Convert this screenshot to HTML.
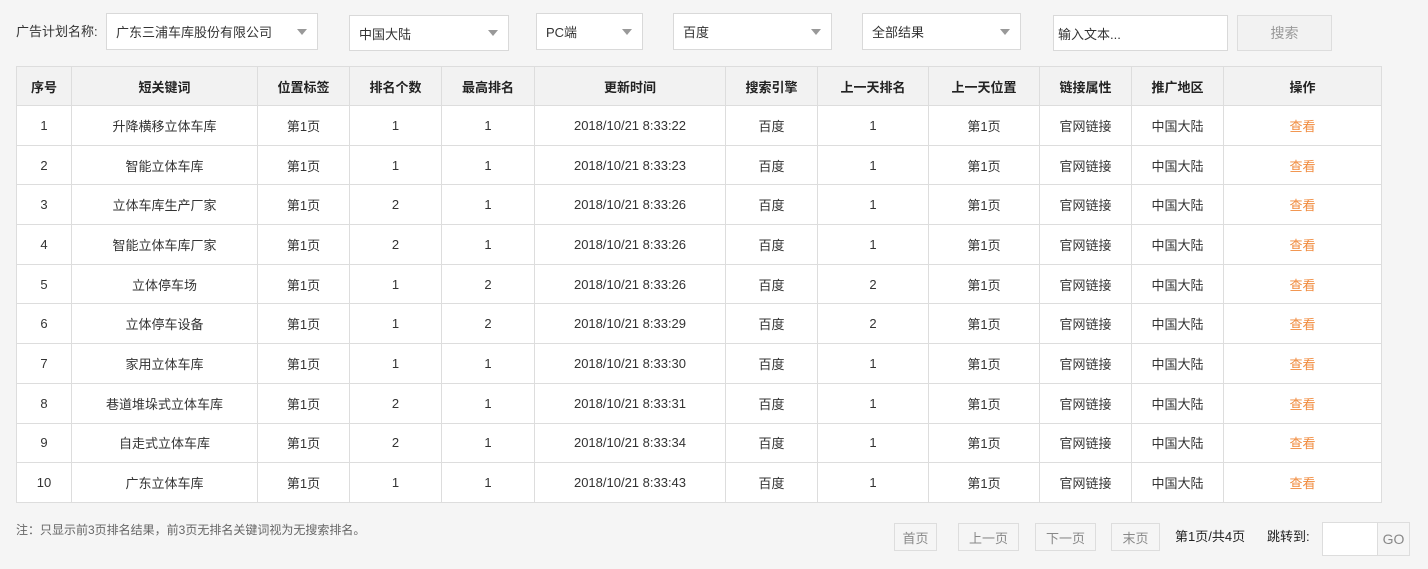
<!DOCTYPE html>
<html><head><meta charset="utf-8"><style>
body{margin:0;width:1428px;height:569px;background:#f5f5f5;font-family:"Liberation Sans","Noto Sans CJK SC",sans-serif;font-size:13px;color:#333;position:relative;overflow:hidden}
.a{position:absolute;box-sizing:border-box}
.sel{background:#fff;border:1px solid #d9d9d9;padding-left:9px;display:flex;align-items:center}
.sel i{position:absolute;right:10px;top:50%;margin-top:-3px;border-left:5px solid transparent;border-right:5px solid transparent;border-top:6px solid #999}
table{position:absolute;left:16px;top:66px;border-collapse:collapse;background:#fff;table-layout:fixed}
td,th{border:1px solid #ddd;text-align:center;height:38.7px;padding:0;font-size:13px}
th{background:#f2f2f2;font-weight:bold;color:#222;height:38px}
.o{color:#f08a3c}
.pb{border:1px solid #ddd;color:#888;display:flex;align-items:center;justify-content:center;background:#f5f5f5}
</style></head><body>
<div class="a" style="left:16px;top:23px;line-height:18px">广告计划名称:</div>
<div class="a sel" style="left:106px;top:13px;width:212px;height:37px">广东三浦车库股份有限公司<i></i></div>
<div class="a sel" style="left:349px;top:15px;width:160px;height:36px">中国大陆<i></i></div>
<div class="a sel" style="left:536px;top:13px;width:107px;height:37px">PC端<i></i></div>
<div class="a sel" style="left:673px;top:13px;width:159px;height:37px">百度<i></i></div>
<div class="a sel" style="left:862px;top:13px;width:159px;height:37px">全部结果<i></i></div>
<div class="a sel" style="left:1053px;top:15px;width:175px;height:36px;padding-left:4px">输入文本...</div>
<div class="a pb" style="left:1237px;top:15px;width:95px;height:36px;background:#f2f2f2;color:#999;font-size:14px">搜索</div>
<table>
<colgroup><col style="width:55px"><col style="width:186px"><col style="width:92px"><col style="width:92px"><col style="width:93px"><col style="width:191px"><col style="width:92px"><col style="width:111px"><col style="width:111px"><col style="width:92px"><col style="width:92px"><col style="width:158px"></colgroup>
<tr><th>序号</th><th>短关键词</th><th>位置标签</th><th>排名个数</th><th>最高排名</th><th>更新时间</th><th>搜索引擎</th><th>上一天排名</th><th>上一天位置</th><th>链接属性</th><th>推广地区</th><th>操作</th></tr>
<tr><td>1</td><td>升降横移立体车库</td><td>第1页</td><td>1</td><td>1</td><td>2018/10/21 8:33:22</td><td>百度</td><td>1</td><td>第1页</td><td>官网链接</td><td>中国大陆</td><td class="o">查看</td></tr>
<tr><td>2</td><td>智能立体车库</td><td>第1页</td><td>1</td><td>1</td><td>2018/10/21 8:33:23</td><td>百度</td><td>1</td><td>第1页</td><td>官网链接</td><td>中国大陆</td><td class="o">查看</td></tr>
<tr><td>3</td><td>立体车库生产厂家</td><td>第1页</td><td>2</td><td>1</td><td>2018/10/21 8:33:26</td><td>百度</td><td>1</td><td>第1页</td><td>官网链接</td><td>中国大陆</td><td class="o">查看</td></tr>
<tr><td>4</td><td>智能立体车库厂家</td><td>第1页</td><td>2</td><td>1</td><td>2018/10/21 8:33:26</td><td>百度</td><td>1</td><td>第1页</td><td>官网链接</td><td>中国大陆</td><td class="o">查看</td></tr>
<tr><td>5</td><td>立体停车场</td><td>第1页</td><td>1</td><td>2</td><td>2018/10/21 8:33:26</td><td>百度</td><td>2</td><td>第1页</td><td>官网链接</td><td>中国大陆</td><td class="o">查看</td></tr>
<tr><td>6</td><td>立体停车设备</td><td>第1页</td><td>1</td><td>2</td><td>2018/10/21 8:33:29</td><td>百度</td><td>2</td><td>第1页</td><td>官网链接</td><td>中国大陆</td><td class="o">查看</td></tr>
<tr><td>7</td><td>家用立体车库</td><td>第1页</td><td>1</td><td>1</td><td>2018/10/21 8:33:30</td><td>百度</td><td>1</td><td>第1页</td><td>官网链接</td><td>中国大陆</td><td class="o">查看</td></tr>
<tr><td>8</td><td>巷道堆垛式立体车库</td><td>第1页</td><td>2</td><td>1</td><td>2018/10/21 8:33:31</td><td>百度</td><td>1</td><td>第1页</td><td>官网链接</td><td>中国大陆</td><td class="o">查看</td></tr>
<tr><td>9</td><td>自走式立体车库</td><td>第1页</td><td>2</td><td>1</td><td>2018/10/21 8:33:34</td><td>百度</td><td>1</td><td>第1页</td><td>官网链接</td><td>中国大陆</td><td class="o">查看</td></tr>
<tr><td>10</td><td>广东立体车库</td><td>第1页</td><td>1</td><td>1</td><td>2018/10/21 8:33:43</td><td>百度</td><td>1</td><td>第1页</td><td>官网链接</td><td>中国大陆</td><td class="o">查看</td></tr>
</table>
<div class="a" style="left:16px;top:521px;color:#666;font-size:12px;line-height:18px">注：只显示前3页排名结果，前3页无排名关键词视为无搜索排名。</div>
<div class="a pb" style="left:894px;top:523px;width:43px;height:28px">首页</div>
<div class="a pb" style="left:958px;top:523px;width:61px;height:28px">上一页</div>
<div class="a pb" style="left:1035px;top:523px;width:61px;height:28px">下一页</div>
<div class="a pb" style="left:1111px;top:523px;width:49px;height:28px">末页</div>
<div class="a" style="left:1175px;top:528px;line-height:18px;color:#222">第1页/共4页</div>
<div class="a" style="left:1267px;top:528px;line-height:18px;color:#222">跳转到:</div>
<div class="a" style="left:1322px;top:522px;width:88px;height:34px;border:1px solid #ddd;background:#fff"></div>
<div class="a pb" style="left:1377px;top:522px;width:33px;height:34px;border-color:#ddd;font-size:14px;color:#888">GO</div>
</body></html>
